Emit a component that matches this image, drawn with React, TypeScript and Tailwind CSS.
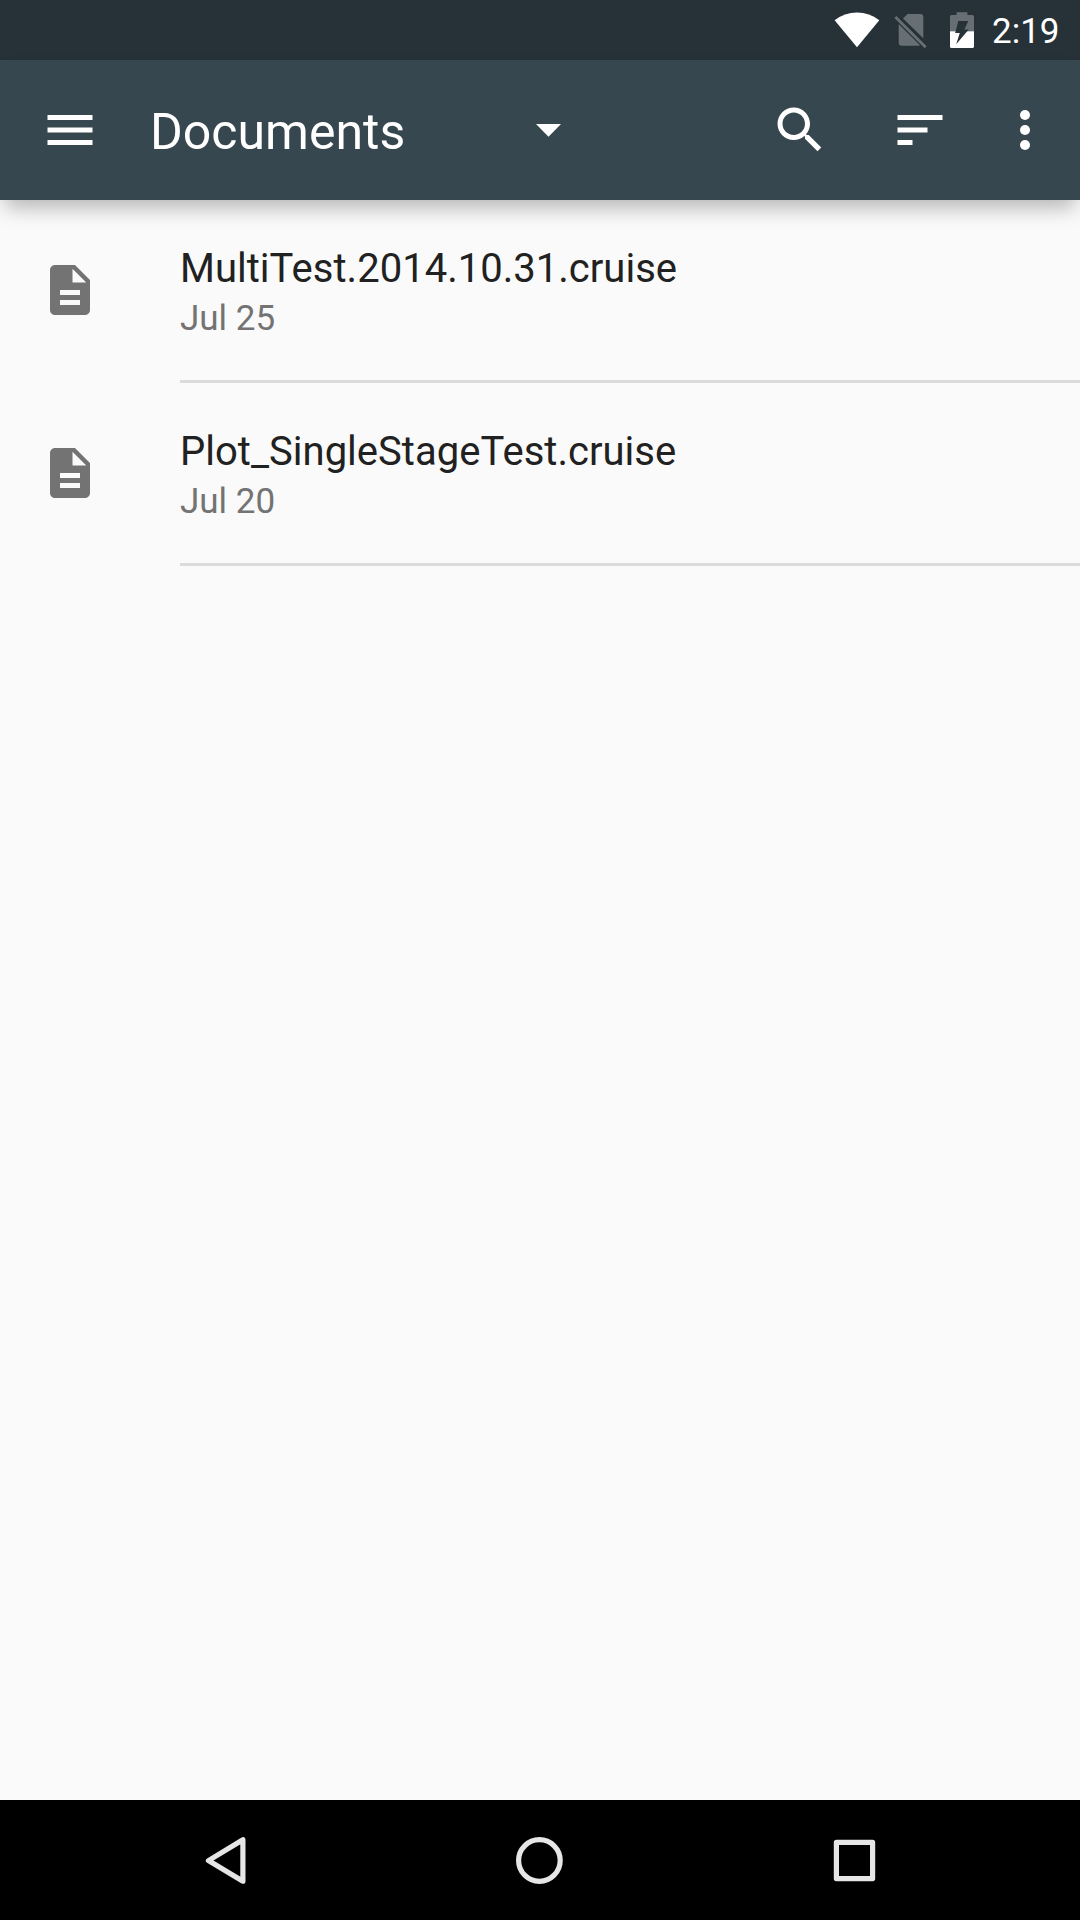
import type { ReactNode } from "react";

type Doc = { name: string; date: string };

const documents: Doc[] = [
  { name: "MultiTest.2014.10.31.cruise", date: "Jul 25" },
  { name: "Plot_SingleStageTest.cruise", date: "Jul 20" },
];

function Icon({ children, className = "" }: { children: ReactNode; className?: string }) {
  return (
    <svg viewBox="0 0 24 24" className={`size-[60px] shrink-0 fill-current ${className}`}>
      {children}
    </svg>
  );
}

function StatusBar() {
  return (
    <div className="flex h-[60px] items-center bg-[#263238] pl-[834px] text-white">
      <svg viewBox="0 0 46 60" className="h-[60px] w-[46px] shrink-0">
        <path d="M0.6 20.3Q10.5 12.5 23 12.5T45.3 20.3L23 47.2Z" fill="#fff" />
      </svg>
      <svg viewBox="0 0 36 60" className="ml-[13px] h-[60px] w-9 shrink-0">
        <g fill="#676f74">
          <path d="M10 18.6L14.6 14H27.6Q30.3 14 30.3 17V38.3Z" />
          <path d="M5.7 24L27 45.3Q26.6 45.8 25.4 45.8H8.6Q5.7 45.8 5.7 43Z" />
        </g>
        <path d="M2.4 17L32.7 47.3" stroke="#676f74" strokeWidth="2.8" />
      </svg>
      <svg viewBox="0 0 24 60" className="ml-[21px] h-[60px] w-6 shrink-0">
        <path d="M1.6 15H6.6V12.2H17.4V15H22.4Q24 15 24 16.6V31.3H0V16.6Q0 15 1.6 15Z" fill="#676f74" />
        <path d="M0 31.3H24V46.4Q24 48 22.4 48H1.6Q0 48 0 46.4Z" fill="#fff" />
        <path d="M8.3 21H18.3L14.3 29.5H18.7L6.2 44.3L9.8 33H5.2Z" fill="#263238" />
      </svg>
      <span className="ml-[18px] pt-1 text-[35px] leading-[56px]">2:19</span>
    </div>
  );
}

function Toolbar() {
  return (
    <header className="relative flex h-[140px] items-center bg-[#37474f] pl-10 text-white shadow-[0_12px_20px_-5px_rgba(0,0,0,0.29)]">
      <Icon>
        <path d="M3 18h18v-2H3v2zm0-5h18v-2H3v2zm0-7v2h18V6H3z" />
      </Icon>
      <h1 className="ml-[50px] w-[386px] pt-1 text-[50px] leading-[60px]">Documents</h1>
      <svg viewBox="0 0 25 13" className="h-[13px] w-[25px] shrink-0 fill-current">
        <path d="M0 0H25L12.5 12.8Z" />
      </svg>
      <Icon className="ml-[209px]">
        <path d="M15.5 14h-.79l-.28-.27C15.41 12.59 16 11.11 16 9.5 16 5.91 13.09 3 9.5 3S3 5.91 3 9.5 5.91 16 9.5 16c1.61 0 3.09-.59 4.23-1.57l.27.28v.79l5 4.99L20.49 19l-4.99-5zm-6 0C7.01 14 5 11.99 5 9.5S7.01 5 9.5 5 14 7.01 14 9.5 11.99 14 9.5 14z" />
      </Icon>
      <Icon className="ml-[60px]">
        <path d="M3 18h6v-2H3v2zM3 6v2h18V6H3zm0 7h12v-2H3v2z" />
      </Icon>
      <Icon className="ml-[45px]">
        <circle cx="12" cy="6" r="2" />
        <circle cx="12" cy="12" r="2" />
        <circle cx="12" cy="18" r="2" />
      </Icon>
    </header>
  );
}

function DocumentRow({ doc }: { doc: Doc }) {
  return (
    <li className="flex h-[183px] pl-10">
      <Icon className="mt-[60px] text-[#737373]">
        <path d="M14 2H6c-1.1 0-1.99.9-1.99 2L4 20c0 1.1.89 2 1.99 2H18c1.1 0 2-.9 2-2V8l-6-6zm2 16H8v-2h8v2zm0-4H8v-2h8v2zm-3-5V3.5L18.5 9H13z" />
      </Icon>
      <div className="ml-20 flex-1 border-b-[3px] border-[#dbdbdb] pt-[45px]">
        <div className="text-[40px] leading-[48px] tracking-[0.02px] text-[#212121]">{doc.name}</div>
        <div className="mt-[5px] text-[35px] leading-[42px] text-[#737373]">{doc.date}</div>
      </div>
    </li>
  );
}

function NavigationBar() {
  return (
    <nav className="flex h-[120px] items-center bg-black pl-[195px]">
      <svg viewBox="0 0 60 60" className="size-[60px] fill-none stroke-[#e6e6e6]" strokeWidth="5.2" strokeLinejoin="round">
        <path d="M13.4 30.6L47.9 9.7V51.2Z" />
      </svg>
      <svg viewBox="0 0 60 60" className="ml-[254px] size-[60px] fill-none stroke-[#e6e6e6]" strokeWidth="5.2">
        <circle cx="30.4" cy="30.5" r="20.8" />
      </svg>
      <svg viewBox="0 0 60 60" className="ml-[256px] size-[60px] fill-none stroke-[#e6e6e6]" strokeWidth="5.2" strokeLinejoin="round">
        <rect x="11.4" y="12.4" width="36.2" height="36.2" />
      </svg>
    </nav>
  );
}

export default function App() {
  return (
    <div className="flex h-[1920px] w-[1080px] flex-col overflow-hidden bg-[#fafafa] font-[Roboto,sans-serif]">
      <StatusBar />
      <Toolbar />
      <ul className="flex-1">
        {documents.map((doc) => (
          <DocumentRow key={doc.name} doc={doc} />
        ))}
      </ul>
      <NavigationBar />
    </div>
  );
}
